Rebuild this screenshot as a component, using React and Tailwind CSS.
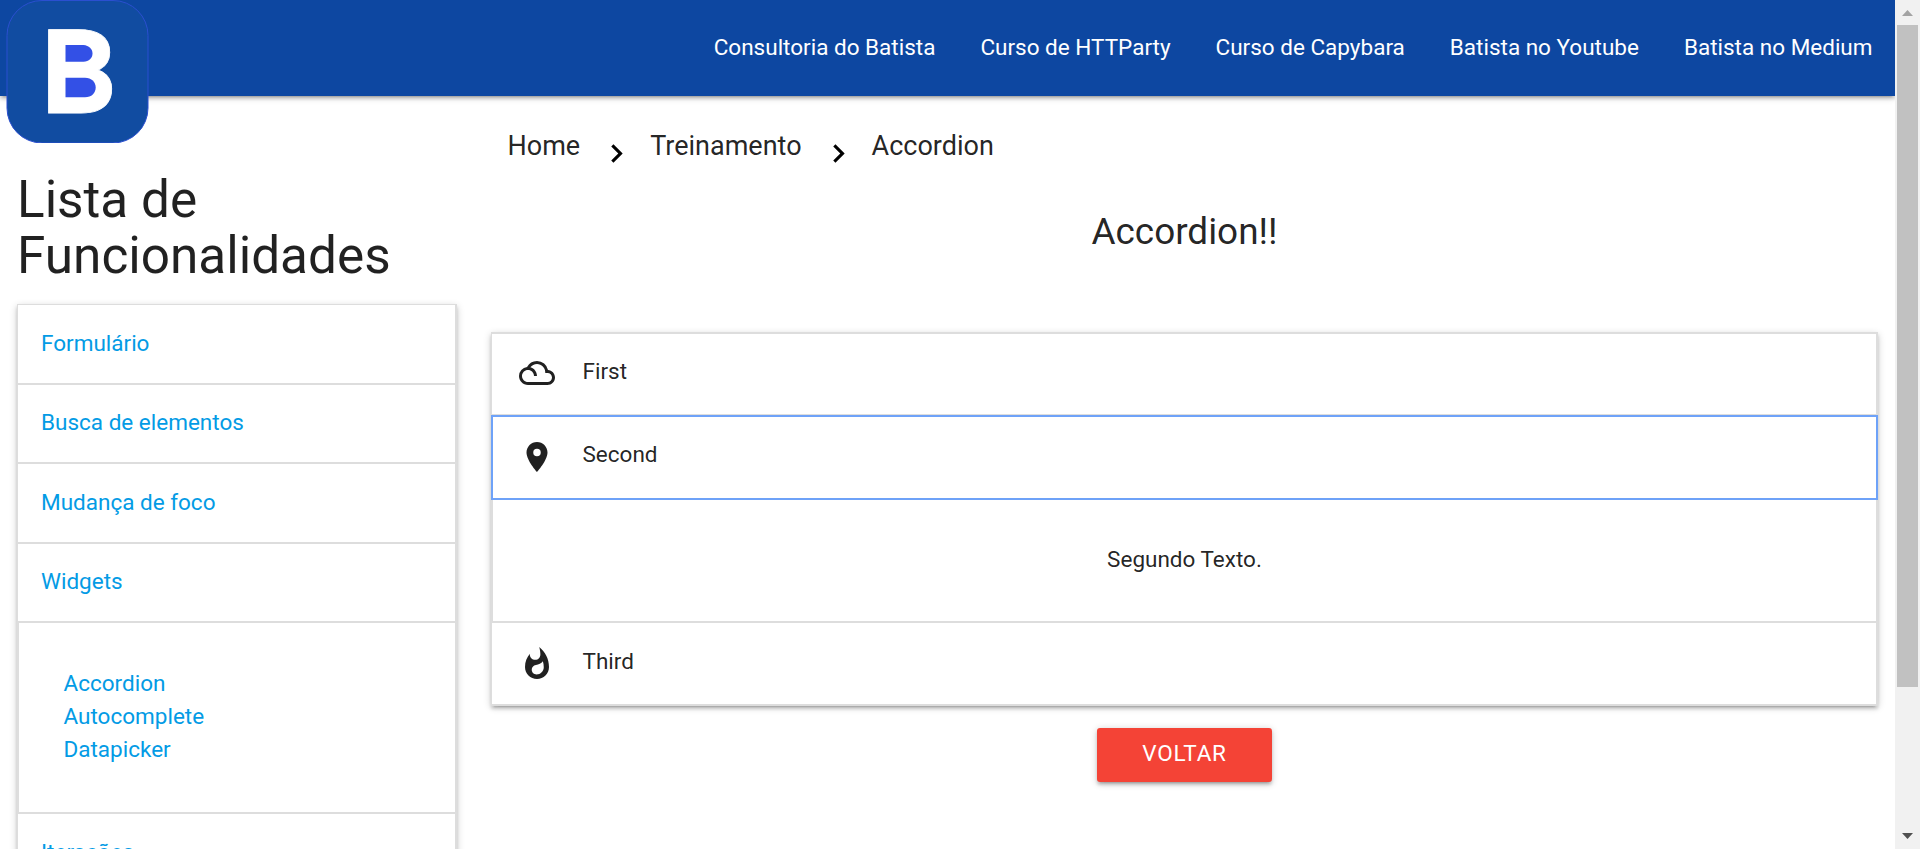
import { MdChevronRight, MdFilterDrama, MdPlace, MdWhatshot } from "react-icons/md";

const navLinks = [
  "Consultoria do Batista",
  "Curso de HTTParty",
  "Curso de Capybara",
  "Batista no Youtube",
  "Batista no Medium",
];

const cardShadow =
  "shadow-[0_3px_3px_0_rgba(0,0,0,0.14),0_4.5px_1.5px_-3px_rgba(0,0,0,0.12),0_1.5px_7.5px_0_rgba(0,0,0,0.2)]";

function Logo() {
  return (
    <svg className="absolute left-[6px] top-0 h-[143px] w-[143px]" viewBox="6 0 143 143">
      <rect x="7" y="0.5" width="141" height="142.5" rx="35" fill="#114ca1" stroke="#2b4fd0" strokeWidth="1" />
      <rect x="58" y="36" width="40" height="70" fill="#ffffff" />
      <text
        transform="translate(41 113) scale(1.02 1)"
        fill="#ffffff"
        stroke="#ffffff"
        strokeWidth="0.8"
        fontFamily="Roboto, sans-serif"
        fontWeight="700"
        fontSize="117"
      >
        B
      </text>
      <path d="M65.500 45H83.500C89 45.500 92.500 49 92.500 53.500S89 61.700 83.500 61.700H65.500z" fill="#3350e6" />
      <path d="M65.500 77.700H85C91.500 77.700 95.700 82 95.700 87.500S91.500 97.300 85 97.300H65.500z" fill="#3350e6" />
    </svg>
  );
}

function Header() {
  return (
    <header className={`relative z-10 flex h-24 shrink-0 items-start justify-end bg-[#0d47a1] ${cardShadow}`}>
      <Logo />
      <nav className="flex text-[22.5px] text-white">
        {navLinks.map((label) => (
          <a key={label} className="whitespace-nowrap px-[22.5px] leading-[94px]">
            {label}
          </a>
        ))}
      </nav>
    </header>
  );
}

function SideHeader({ label, className }) {
  return (
    <div className={`flex shrink-0 items-center border-b-2 border-[#ddd] pl-[23px] ${className}`}>{label}</div>
  );
}

function Sidebar() {
  return (
    <aside className="ml-[17px] w-[440px] shrink-0">
      <h4 className="mt-[76px] text-[51.3px] leading-[56px]">
        Lista de
        <br />
        Funcionalidades
      </h4>
      <div
        className={`mt-[20px] flex h-[620px] flex-col border-l border-r-2 border-t border-[#ddd] text-[22.5px] text-[#039be5] ${cardShadow}`}
      >
        <SideHeader label="Formulário" className="h-[80px]" />
        <SideHeader label="Busca de elementos" className="h-[79px] pb-px" />
        <SideHeader label="Mudança de foco" className="h-[80px]" />
        <SideHeader label="Widgets" className="h-[79px] pb-px" />
        <div className="flex h-[191px] shrink-0 flex-col justify-center border-b-2 border-l border-[#ddd] pb-[2px] pl-[44.5px] leading-[33px]">
          <a>Accordion</a>
          <a>Autocomplete</a>
          <a>Datapicker</a>
        </div>
        <SideHeader label="Iterações" className="h-[80px]" />
      </div>
    </aside>
  );
}

function Breadcrumb() {
  return (
    <div className="flex h-[100px] items-start pl-[16.5px] text-[27px] leading-[100px]">
      <a>Home</a>
      <MdChevronRight className="ml-[18px] mr-[15px] mt-[39px] size-[37px] text-black" />
      <a>Treinamento</a>
      <MdChevronRight className="ml-[18px] mr-[15px] mt-[39px] size-[37px] text-black" />
      <a>Accordion</a>
    </div>
  );
}

function ItemHeader({ icon: Icon, label, className }) {
  return (
    <div className={`flex items-center pl-[27px] ${className}`}>
      <Icon className="mr-[27.5px] size-[36px] -translate-y-px" />
      <span className="-mt-[5px]">{label}</span>
    </div>
  );
}

function Content() {
  return (
    <main className="ml-[34px] flex w-[1387px] shrink-0 flex-col">
      <Breadcrumb />
      <h5 className="mt-[15px] text-center text-[36.9px] leading-[41px]">Accordion!!</h5>
      <div
        className={`mt-[80px] h-[374px] border-b-2 border-l border-r-2 border-t-2 border-[#ddd] text-[22.5px] ${cardShadow}`}
      >
        <ItemHeader icon={MdFilterDrama} label="First" className="h-[81px] border-b border-[#ddd]" />
        <ItemHeader
          icon={MdPlace}
          label="Second"
          className="-ml-px -mr-[2px] h-[85px] border-2 border-[#6ea2f8] pl-[26px]!"
        />
        <div className="flex h-[123px] items-center justify-center border-b-2 border-l border-[#ddd] pb-px">
          Segundo Texto.
        </div>
        <ItemHeader icon={MdWhatshot} label="Third" className="h-[81px] pt-[2px]" />
      </div>
      <a
        className={`mt-[22px] flex h-[54px] w-[175px] items-center justify-center self-center rounded-[3px] bg-[#f44336] pb-[2px] text-[22.5px] tracking-[0.75px] text-white ${cardShadow}`}
      >
        VOLTAR
      </a>
    </main>
  );
}

function Scrollbar() {
  return (
    <div className="flex w-[25px] shrink-0 flex-col items-center bg-[#f1f1f1]">
      <div className="flex h-[25px] items-center justify-center">
        <svg className="h-[6px] w-[11px]" viewBox="0 0 11 6">
          <path d="M0 6 5.5 0 11 6z" fill="#a3a3a3" />
        </svg>
      </div>
      <div className="h-[662px] w-[21px] bg-[#c1c1c1]" />
      <div className="mt-auto flex h-[26px] items-center justify-center">
        <svg className="h-[6px] w-[11px]" viewBox="0 0 11 6">
          <path d="M0 0 5.5 6 11 0z" fill="#505050" />
        </svg>
      </div>
    </div>
  );
}

export default function App() {
  return (
    <div className="flex h-[849px] w-[1920px] overflow-hidden bg-white font-['Roboto',sans-serif] text-[rgba(0,0,0,0.87)]">
      <div className="flex w-[1895px] shrink-0 flex-col overflow-hidden">
        <Header />
        <div className="flex min-h-0 flex-1 items-start">
          <Sidebar />
          <Content />
        </div>
      </div>
      <Scrollbar />
    </div>
  );
}
